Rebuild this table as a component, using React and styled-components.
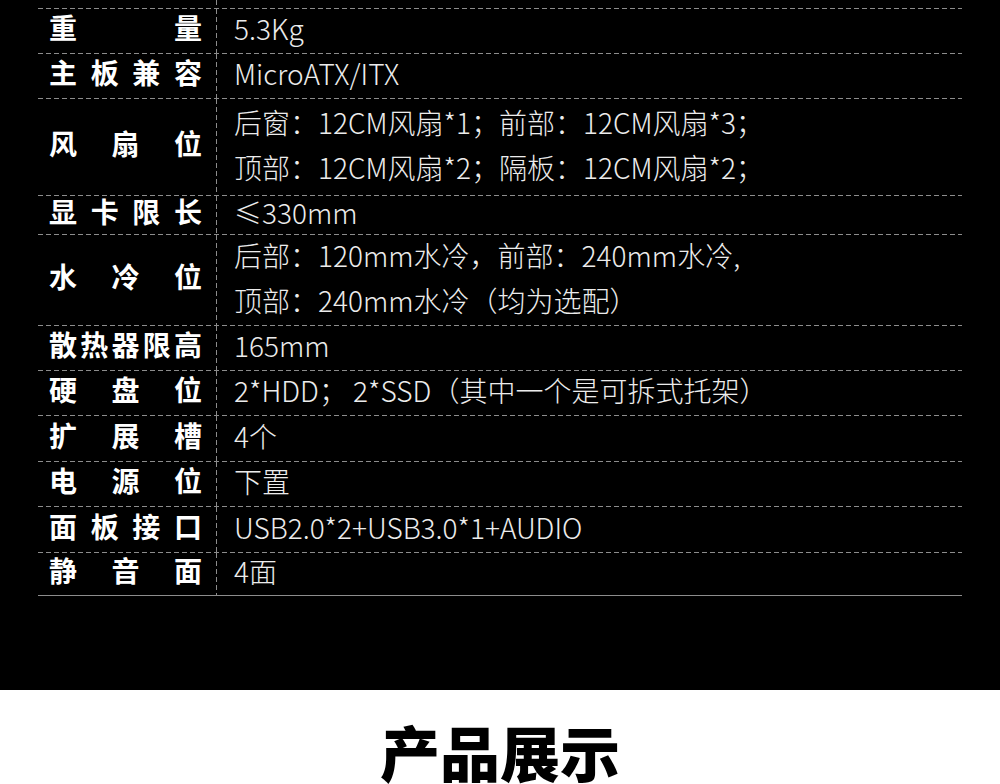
import React from "react";
import styled, { createGlobalStyle } from "styled-components";

const GlobalStyle = createGlobalStyle`
  html, body {
    margin: 0;
    padding: 0;
    background: #fff;
  }
  body {
    font-family: "Noto Sans CJK SC", "Noto Sans", sans-serif;
  }
`

const Page = styled.div`
  width: 1000px;
`

const Specs = styled.section`
  background: #000;
  padding: 0 38px 94px;
`

const Table = styled.div`
  display: flex;
  flex-direction: column;
`

const Row = styled.div`
  display: grid;
  grid-template-columns: 178px 1fr;
  grid-template-rows: minmax(0, 1fr);
  height: ${p => p.$h}px;
  box-sizing: border-box;
  background-image: linear-gradient(to right, #8c8c8c 5px, transparent 5px);
  background-size: 8px 1px;
  background-repeat: repeat-x;
  background-position: left bottom;
  ${p => p.$last && `
    background: none;
    border-bottom: 1px solid #8c8c8c;
  `}
`

const Label = styled.div`
  display: flex;
  align-items: center;
  justify-content: space-between;
  min-height: 0;
  padding: 0 14px 9px 11px;
  font-size: 28px;
  line-height: 40px;
  font-weight: 700;
  color: #fff;
`

const Value = styled.div`
  display: flex;
  flex-direction: column;
  justify-content: center;
  min-height: 0;
  padding: 0 0 6px 18px;
  font-size: 28px;
  font-weight: 300;
  line-height: 45px;
  color: #ececec;
  white-space: nowrap;
  background-image: linear-gradient(to bottom, #8c8c8c 5px, transparent 5px);
  background-size: 1px 8px;
  background-repeat: repeat-y;
  background-position: left top;
`

const Showcase = styled.section`
  background: #fff;
  padding-top: 31px;
  height: 94px;
  box-sizing: border-box;
  text-align: center;
`

const Title = styled.h2`
  margin: 0;
  font-size: 60px;
  line-height: 60px;
  font-weight: 900;
  color: #000;
`

const specs = [
  { label: "重量", h: 45, lines: ["5.3Kg"] },
  { label: "主板兼容", h: 45, lines: ["MicroATX/ITX"] },
  { label: "风扇位", h: 97, lines: ["后窗：12CM风扇*1；前部：12CM风扇*3；", "顶部：12CM风扇*2；隔板：12CM风扇*2；"] },
  { label: "显卡限长", h: 39, lines: ["≤330mm"] },
  { label: "水冷位", h: 91, lines: ["后部：120mm水冷，前部：240mm水冷,", "顶部：240mm水冷（均为选配）"] },
  { label: "散热器限高", h: 45, lines: ["165mm"] },
  { label: "硬盘位", h: 45, lines: ["2*HDD； 2*SSD（其中一个是可拆式托架）"] },
  { label: "扩展槽", h: 46, lines: ["4个"] },
  { label: "电源位", h: 45, lines: ["下置"] },
  { label: "面板接口", h: 46, lines: ["USB2.0*2+USB3.0*1+AUDIO"] },
  { label: "静音面", h: 43, lines: ["4面"] },
]

const App = () => {
  return (
    <Page>
      <GlobalStyle />
      <Specs>
        <Table>
          <Row $h={9}>
            <Label />
            <Value />
          </Row>
          {specs.map((s, i) => (
            <Row key={s.label} $h={s.h} $last={i === specs.length - 1}>
              <Label>
                {[...s.label].map((c, j) => <span key={j}>{c}</span>)}
              </Label>
              <Value>
                {s.lines.map((l, j) => <div key={j}>{l}</div>)}
              </Value>
            </Row>
          ))}
        </Table>
      </Specs>
      <Showcase>
        <Title>产品展示</Title>
      </Showcase>
    </Page>
  )
}

export default App
